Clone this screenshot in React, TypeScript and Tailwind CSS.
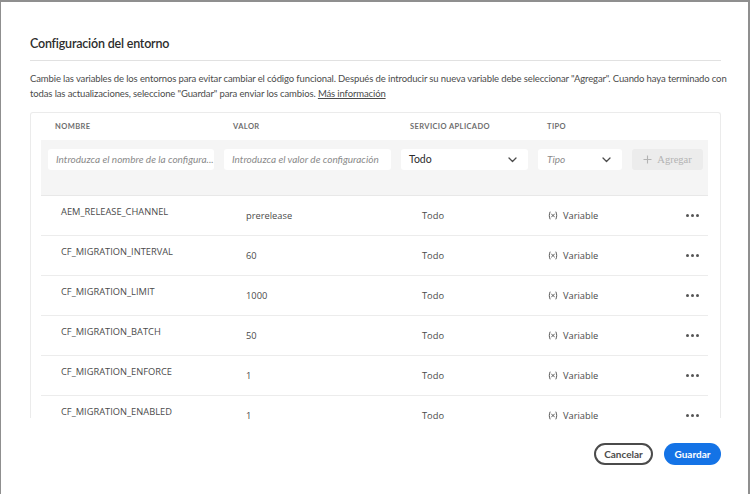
import React from "react";

const rows = [
  ["AEM_RELEASE_CHANNEL", "prerelease"],
  ["CF_MIGRATION_INTERVAL", "60"],
  ["CF_MIGRATION_LIMIT", "1000"],
  ["CF_MIGRATION_BATCH", "50"],
  ["CF_MIGRATION_ENFORCE", "1"],
  ["CF_MIGRATION_ENABLED", "1"],
];

function Chevron() {
  return (
    <svg width="9" height="6" viewBox="0 0 9 6" fill="none">
      <path d="M1 1l3.5 3.5L8 1" stroke="#4b4b4b" strokeWidth="1.3" strokeLinecap="round" strokeLinejoin="round" />
    </svg>
  );
}

function VarIcon() {
  return (
    <svg width="10" height="9" viewBox="0 0 10 9" fill="none">
      <path d="M2 1C1 2.5 1 6.5 2 8" stroke="#4b4b4b" strokeWidth="0.9" strokeLinecap="round" />
      <path d="M8 1C9 2.5 9 6.5 8 8" stroke="#4b4b4b" strokeWidth="0.9" strokeLinecap="round" />
      <path d="M3.5 3l3 3M6.5 3l-3 3" stroke="#4b4b4b" strokeWidth="0.9" strokeLinecap="round" />
    </svg>
  );
}

export default function App() {
  return (
    <div className="w-[750px] h-[494px] bg-[#8f8f8f] pl-px pt-[2px] pr-[2px] overflow-hidden">
      <div className="h-full bg-white relative" style={{ fontFamily: "Lato, 'Open Sans', sans-serif" }}>
        <div className="pl-[29px] pr-[27px]">
          <div className="pt-[33px] pb-[7px] border-b border-[#e1e1e1]">
            <h1 className="text-[12.5px] tracking-[-0.2px] font-semibold text-[#2c2c2c] leading-[18px]">Configuración del entorno</h1>
          </div>
          <p className="mt-[10px] text-[9.5px] tracking-[-0.12px] leading-[15px] text-[#4b4b4b]">
            <span className="whitespace-nowrap">Cambie las variables de los entornos para evitar cambiar el código funcional. Después de introducir su nueva variable debe seleccionar "Agregar". Cuando haya terminado con</span>
            <br />
            <span className="whitespace-nowrap">todas las actualizaciones, seleccione "Guardar" para enviar los cambios. <span className="underline">Más información</span></span>
          </p>
          <div className="mt-[11px] h-[309px] overflow-hidden">
            <div className="h-[306px] border border-b-0 border-[#ebebeb] rounded-t-[3px] pl-[10px] pr-[12px]">
              <div className="h-[27px] flex items-center text-[7.5px] font-bold tracking-[0.4px] text-[#6e6e6e]">
                <div className="w-[183px] pl-[14px]">NOMBRE</div>
                <div className="w-[177px] pl-[9px]">VALOR</div>
                <div className="w-[137px] pl-[9px]">SERVICIO APLICADO</div>
                <div className="pl-[9px]">TIPO</div>
              </div>
              <div className="h-[56px] bg-[#f5f5f5] border-b border-[#e8e8e8] pt-[9px] pl-[7px] flex gap-[10px] text-[10px]">
                <div className="w-[166px] h-[21px] bg-white rounded-[3px] flex items-center px-[8px] italic text-[#8a8a8a] whitespace-nowrap overflow-hidden">Introduzca el nombre de la configura...</div>
                <div className="w-[167px] h-[21px] bg-white rounded-[3px] flex items-center px-[8px] italic text-[#8a8a8a] whitespace-nowrap overflow-hidden">Introduzca el valor de configuración</div>
                <div className="w-[127px] h-[21px] bg-white rounded-[3px] flex items-center justify-between pl-[8px] pr-[11px] text-[#2c2c2c] text-[10.5px]">
                  <span>Todo</span>
                  <Chevron />
                </div>
                <div className="w-[84px] h-[21px] bg-white rounded-[3px] flex items-center justify-between pl-[9px] pr-[11px] italic text-[#8a8a8a]">
                  <span>Tipo</span>
                  <Chevron />
                </div>
                <div className="w-[71px] h-[21px] bg-[#ececec] rounded-[3px] flex items-center justify-center gap-[5px] text-[#b3b3b3]" style={{ fontFamily: "'Liberation Serif', serif" }}>
                  <svg width="9" height="9" viewBox="0 0 9 9"><path d="M4.5 0.5v8M0.5 4.5h8" stroke="#b3b3b3" strokeWidth="1.1" /></svg>
                  <span className="text-[10.5px]">Agregar</span>
                </div>
              </div>
              {rows.map(([n, v]) => (
                <div key={n} className="h-[40px] border-b border-[#ececec] flex items-center text-[9.3px] text-[#4b4b4b]" style={{ fontFamily: "'Open Sans', sans-serif" }}>
                  <div className="w-[205px] pl-[20px] pb-[8px]">{n}</div>
                  <div className="w-[176px]">{v}</div>
                  <div className="w-[126px]">Todo</div>
                  <div className="flex items-center gap-[5px] w-[138px]">
                    <VarIcon />
                    <span>Variable</span>
                  </div>
                  <div className="flex gap-[2px]">
                    <span className="w-[3px] h-[3px] rounded-full bg-[#555]" />
                    <span className="w-[3px] h-[3px] rounded-full bg-[#555]" />
                    <span className="w-[3px] h-[3px] rounded-full bg-[#555]" />
                  </div>
                </div>
              ))}
            </div>
          </div>
          <div className="mt-[22px] flex justify-end gap-[11px]">
            <button className="w-[59px] h-[22px] rounded-full border-2 border-[#4b4b4b] text-[10px] font-bold text-[#4b4b4b] flex items-center justify-center">Cancelar</button>
            <button className="w-[57px] h-[22px] rounded-full bg-[#1473e6] text-[10px] font-bold text-white flex items-center justify-center">Guardar</button>
          </div>
        </div>
      </div>
    </div>
  );
}
